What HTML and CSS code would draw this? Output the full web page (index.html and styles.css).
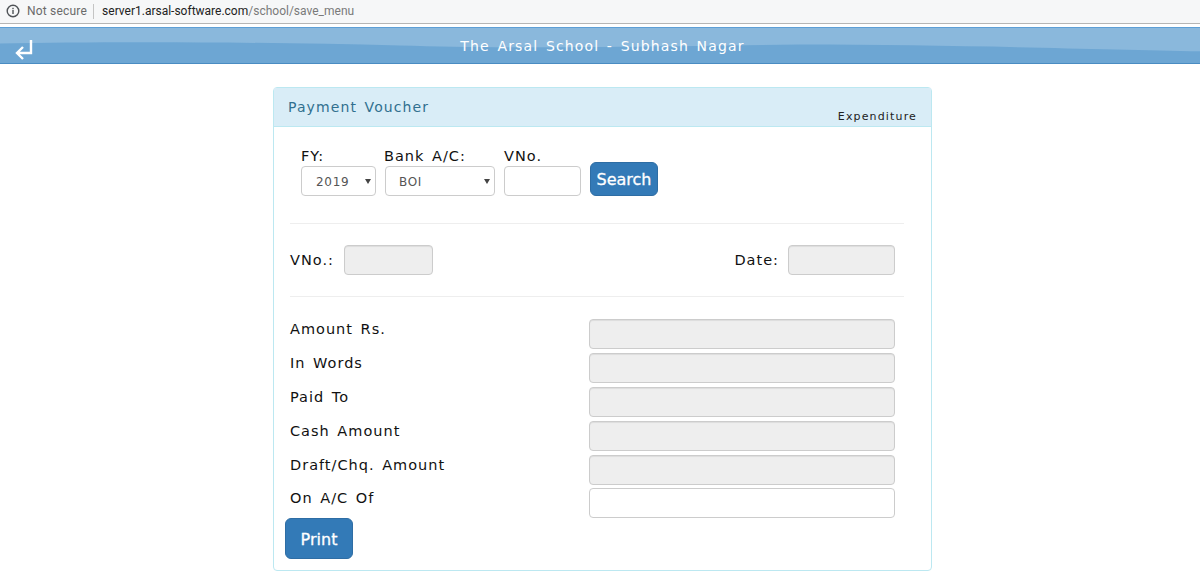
FILE: index.html
```html
<!DOCTYPE html>
<html lang="en">
<head>
    <meta charset="UTF-8">
    <title>Payment Voucher</title>
    <link rel="stylesheet" href="styles.css">
</head>
<body>
    <!-- Browser address bar -->
    <div class="addressbar">
        <svg class="info-icon" width="14" height="14" viewBox="0 0 14 14">
            <circle cx="7" cy="7" r="5.8" fill="none" stroke="#4f5357" stroke-width="1.4"/>
            <rect x="6.3" y="6" width="1.4" height="4" fill="#4f5357"/>
            <rect x="6.3" y="3.8" width="1.4" height="1.4" fill="#4f5357"/>
        </svg>
        <span class="not-secure">Not secure</span>
        <span class="url"><b>server1.arsal-software.com</b>/school/save_menu</span>
    </div>

    <!-- Top bar -->
    <div class="topbar">
        <svg class="wave" viewBox="0 0 1200 36" preserveAspectRatio="none">
            <path d="M0 16 C100 14 250 14 400 18 C500 21 600 20 800 17 C950 17 1100 22 1200 24 L1200 36 L0 36 Z" fill="#6da6d3"/>
        </svg>
        <svg class="back-icon" width="20" height="22" viewBox="0 0 20 22">
            <path d="M17 1 V14 H3 M9 8 L3 14 L9 20" fill="none" stroke="#fff" stroke-width="2.4"/>
        </svg>
        <div class="topbar-title">The Arsal School - Subhash Nagar</div>
    </div>

    <div class="panel">
        <div class="panel-heading">
            <span class="panel-title">Payment Voucher</span>
            <span class="panel-tag">Expenditure</span>
        </div>
        <div class="panel-body">
            <div class="search-row">
                <div class="field fy">
                    <label>FY:</label>
                    <div class="select-box">2019</div>
                </div>
                <div class="field bank">
                    <label>Bank A/C:</label>
                    <div class="select-box">BOI</div>
                </div>
                <div class="field vno">
                    <label>VNo.</label>
                    <input type="text" class="box">
                </div>
                <button class="btn btn-search">Search</button>
            </div>
            <div class="divider divider-first"></div>
            <div class="meta-row">
                <div class="meta-item">
                    <label>VNo.:</label>
                    <input type="text" class="box off meta-vno" disabled>
                </div>
                <div class="meta-item">
                    <label>Date:</label>
                    <input type="text" class="box off meta-date" disabled>
                </div>
            </div>
            <div class="divider"></div>
            <div class="rows">
                <div class="row"><label>Amount Rs.</label><input type="text" class="box off wide" disabled></div>
                <div class="row"><label>In Words</label><input type="text" class="box off wide" disabled></div>
                <div class="row"><label>Paid To</label><input type="text" class="box off wide" disabled></div>
                <div class="row"><label>Cash Amount</label><input type="text" class="box off wide" disabled></div>
                <div class="row"><label>Draft/Chq. Amount</label><input type="text" class="box off wide" disabled></div>
                <div class="row"><label>On A/C Of</label><input type="text" class="box wide"></div>
            </div>
            <button class="btn btn-print">Print</button>
        </div>
    </div>
</body>
</html>
```

FILE: styles.css
```css
html, body {
    height: 575px;
    overflow: hidden;
}
body {
    font-family: "DejaVu Sans", Verdana, sans-serif;
    margin: 0;
    padding: 0;
    background-color: #fff;
    color: #222;
}
label {
    font-size: 14.5px;
    letter-spacing: 1px;
    word-spacing: 2px;
    color: #111;
}

/* Address bar */
.addressbar {
    box-sizing: border-box;
    background-color: #f6f7f8;
    border-bottom: 1px solid #b5b5b5;
    height: 24px;
    display: flex;
    align-items: center;
    padding: 0 0 1px 6px;
    font-family: "Roboto", sans-serif;
    font-size: 12px;
}
.not-secure {
    color: #6a6a6a;
    margin-left: 7px;
    padding-right: 6px;
    border-right: 1px solid #c4c4c4;
    line-height: 15px;
    letter-spacing: 0.2px;
}
.url {
    margin-left: 8px;
    color: #7a7a7a;
}
.url b {
    font-weight: normal;
    color: #222;
}

/* Top bar */
.topbar {
    position: relative;
    margin-top: 3px;
    height: 37px;
    box-sizing: border-box;
    background-color: #8ab8dc;
    border-top: 1px solid #5d9fd6;
    border-bottom: 1px solid #4a8cc2;
    display: flex;
    align-items: center;
    justify-content: center;
    padding-left: 5px;
}
.wave {
    position: absolute;
    left: 0;
    top: 0;
    width: 100%;
    height: 100%;
}
.back-icon {
    position: absolute;
    left: 14px;
    top: 11px;
}
.topbar-title {
    position: relative;
    color: #fff;
    font-size: 14px;
    letter-spacing: 1.15px;
    word-spacing: 2px;
}

/* Panel */
.panel {
    width: 659px;
    height: 484px;
    box-sizing: border-box;
    margin: 23px 0 0 273px;
    border: 1px solid #bce8f1;
    border-radius: 4px;
}
.panel-heading {
    height: 39px;
    box-sizing: border-box;
    background-color: #d9edf7;
    border-bottom: 1px solid #bce8f1;
    display: flex;
    justify-content: space-between;
    padding: 11px 14px 0 14px;
}
.panel-title {
    font-size: 14px;
    letter-spacing: 1.1px;
    word-spacing: 2px;
    color: #31708f;
}
.panel-tag {
    font-size: 11px;
    letter-spacing: 1.15px;
    color: #222;
    margin-top: 11px;
}
.panel-body {
    padding: 0 27px 0 16px;
}

/* Search */
.search-row {
    display: flex;
    align-items: flex-end;
    height: 69px;
    padding-left: 11px;
}
.field {
    display: flex;
    flex-direction: column;
}
.field label {
    line-height: 18px;
    margin-bottom: 1px;
}
.fy { width: 83px; }
.bank { width: 120px; }
.vno { width: 86px; }
.select-box {
    position: relative;
    height: 30px;
    box-sizing: border-box;
    border: 1px solid #ccc;
    border-radius: 4px;
    font-size: 12px;
    line-height: 30px;
    color: #555;
    letter-spacing: 0.7px;
    padding-left: 14px;
}
.fy .select-box { width: 75px; }
.bank .select-box { width: 110px; margin-left: 1px; padding-left: 13px; }
.select-box::after {
    content: "";
    position: absolute;
    right: 4px;
    top: 12px;
    border-top: 5px solid #444;
    border-left: 3px solid transparent;
    border-right: 3px solid transparent;
}
.box {
    display: block;
    height: 30px;
    box-sizing: border-box;
    border: 1px solid #ccc;
    border-radius: 4px;
    background-color: #fff;
    padding: 0;
    margin: 0;
}
.vno .box { width: 77px; }
.off {
    background-color: #eee;
    box-shadow: inset 0 1px 1px rgba(0, 0, 0, 0.075);
}
.btn {
    font-family: inherit;
    background-color: #337ab7;
    border: 1px solid #2e6da4;
    border-radius: 6px;
    color: #fff;
    font-size: 16px;
    padding: 0;
    -webkit-text-stroke: 0.3px #fff;
}
.btn-search {
    width: 68px;
    height: 34px;
}
.btn-print {
    width: 68px;
    height: 41px;
    margin-left: -5px;
    padding-top: 1px;
}

.divider {
    height: 1px;
    background-color: #eee;
    width: 614px;
}
.divider-first {
    margin-top: 27px;
}
.meta-row {
    display: flex;
    justify-content: space-between;
    width: 605px;
    height: 30px;
    margin: 21px 0 21px;
}
.meta-item {
    display: flex;
    align-items: center;
    gap: 9px;
}
.meta-vno { width: 89px; margin-left: 1px; }
.meta-date { width: 107px; }

.rows {
    margin-top: 22px;
}
.row {
    display: flex;
    justify-content: space-between;
    width: 605px;
    height: 34px;
}
.row:last-child {
    height: 30px;
    margin-top: -1px;
}
.row label {
    line-height: 20px;
}
.wide {
    width: 306px;
}
```
